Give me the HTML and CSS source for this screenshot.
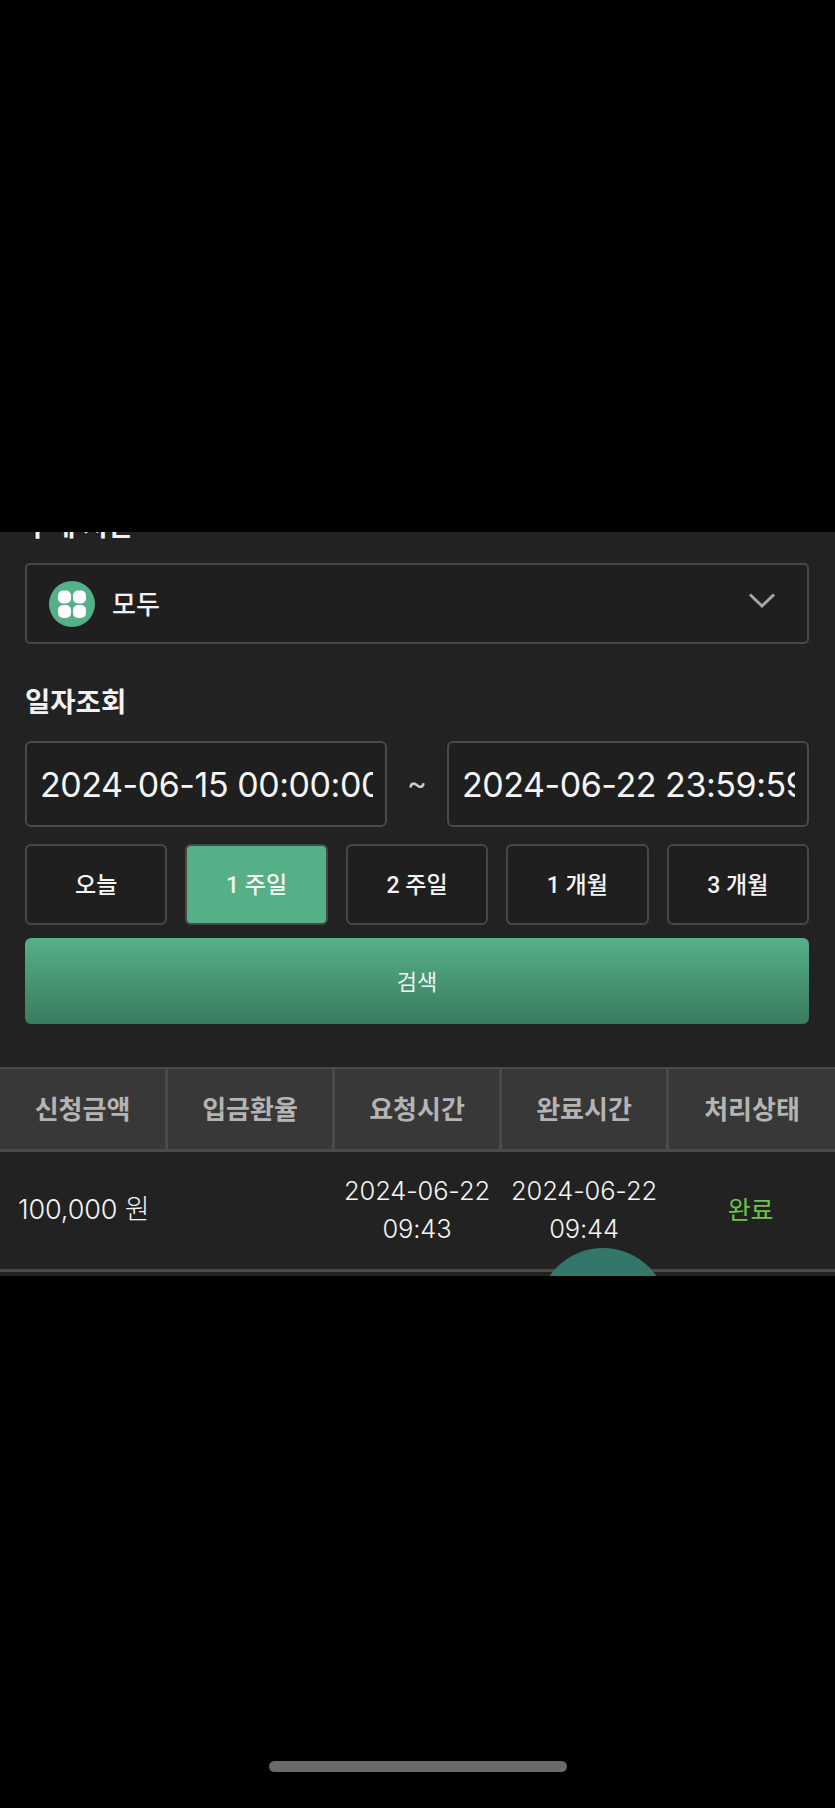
FILE: index.html
```html
<!DOCTYPE html>
<html lang="ko">
<head>
<meta charset="utf-8">
<title>일자조회</title>
<link rel="stylesheet" href="styles.css">
</head>
<body>
<main class="screen">
  <section class="panel">
    <div class="panel-inner">
      <h2 class="label label-clipped">구매 시간</h2>
      <div class="select">
        <span class="coin">
          <svg width="46" height="46" viewBox="0 0 46 46"><circle cx="23" cy="23" r="23" fill="#55b087"/><rect x="9" y="9.5" width="13" height="13" rx="5" fill="#fff"/><rect x="24" y="9.5" width="13" height="13" rx="5" fill="#fff"/><rect x="9" y="24" width="13" height="13" rx="5" fill="#fff"/><rect x="24" y="24" width="13" height="13" rx="5" fill="#fff"/></svg>
        </span>
        <span class="select-text">모두</span>
        <svg class="chevron" width="28" height="17" viewBox="0 0 28 17"><path d="M2 2.5 14 14 26 2.5" fill="none" stroke="#a6a6a6" stroke-width="3"/></svg>
      </div>
      <h2 class="label">일자조회</h2>
      <div class="dates">
        <input class="date" value="2024-06-15 00:00:00" readonly>
        <span class="tilde">~</span>
        <input class="date" value="2024-06-22 23:59:59" readonly>
      </div>
      <div class="ranges">
        <button class="range">오늘</button>
        <button class="range range-on">1 주일</button>
        <button class="range">2 주일</button>
        <button class="range">1 개월</button>
        <button class="range">3 개월</button>
      </div>
      <button class="search">검색</button>
    </div>
    <div class="table">
      <div class="thead">
        <div class="th">신청금액</div>
        <div class="th">입금환율</div>
        <div class="th">요청시간</div>
        <div class="th">완료시간</div>
        <div class="th">처리상태</div>
      </div>
      <div class="tr">
        <div class="td td-amount">100,000 원</div>
        <div class="td"></div>
        <div class="td td-time">2024-06-22<br>09:43</div>
        <div class="td td-time">2024-06-22<br>09:44</div>
        <div class="td td-done">완료</div>
      </div>
    </div>
    <div class="fab"></div>
  </section>
  <div class="home-bar"></div>
</main>
</body>
</html>
```
FILE: styles.css
```css
* { box-sizing: border-box; }
html, body { margin: 0; background: #000; }
body { font-family: Inter, "Noto Sans CJK KR", sans-serif; color: #fff; }
.screen { width: 835px; height: 1808px; padding-top: 532px; overflow: hidden; }
.panel { position: relative; height: 744px; background: #222; overflow: hidden; }
.panel-inner { padding: 0 26px 0 25px; margin-top: -23px; }
.label { margin: 0; font-size: 27.5px; line-height: 34px; font-weight: 600; color: #f2f2f2; }
.label-clipped { height: 54px; }
.select { display: flex; align-items: center; height: 81px; padding: 0 30px 0 22px; background: #1f1f1f; border: 2px solid #484848; border-radius: 5px; margin-bottom: 41px; }
.coin { display: flex; width: 46px; height: 46px; margin-right: 17px; }
.select-text { flex: 1; padding-bottom: 3px; font-size: 26px; font-weight: 500; color: #f0f0f0; }
.chevron { margin-top: -6px; margin-right: 1px; }
.dates { display: flex; align-items: center; margin-top: 22px; }
.date { flex: 0 0 362px; width: 362px; height: 86px; padding: 0 12px 0 13px; background: #1f1f1f; border: 2px solid #4a4a4a; border-radius: 6px; font-family: Inter, sans-serif; font-size: 34px; letter-spacing: -0.45px; color: #f5f5f5; outline: none; }
.tilde { flex: 1; padding-bottom: 3px; text-align: center; font-size: 30px; color: #cfcfcf; }
.ranges { display: grid; grid-template-columns: repeat(5, 1fr); column-gap: 18px; margin-top: 17px; }
.range { height: 81px; padding: 0 0 4px; background: #1f1f1f; border: 2px solid #484848; border-radius: 6px; font-family: Roboto, "Noto Sans CJK KR", sans-serif; font-size: 23px; font-weight: 500; color: #f5f5f5; }
.range-on { background: #55b087; }
.search { display: block; width: 100%; height: 86px; margin-top: 13px; padding: 0 0 3px; border: 0; border-radius: 6px; background: linear-gradient(#55b087, #3a7b60); font-family: Roboto, "Noto Sans CJK KR", sans-serif; font-size: 22px; color: #f0f0f0; }
.table { margin-top: 43px; }
.thead, .tr { display: grid; grid-template-columns: 168px 167px 167px 167px 166px; }
.thead { height: 85px; background: #383838; border-top: 2px solid #4a4a4a; border-bottom: 3px solid #4a4a4a; }
.th { display: flex; align-items: center; justify-content: center; padding-bottom: 3px; border-right: 3px solid #4a4a4a; font-size: 26px; font-weight: 600; color: #b4b4b4; }
.th:last-child { border-right: 0; }
.tr { height: 120px; background: #222; border-bottom: 3px solid #4a4a4a; }
.td { display: flex; align-items: center; justify-content: center; padding-bottom: 2px; text-align: center; font-size: 25.5px; line-height: 38px; font-weight: 300; color: #f5f5f5; letter-spacing: -0.15px; }
.td-time { padding-right: 3px; }
.td-amount { justify-content: flex-start; padding-left: 18px; font-size: 27px; }
.td-done { padding-right: 3px; color: #6cc54a; font-size: 25px; font-weight: 400; }
.fab { position: absolute; left: 538px; top: 716px; width: 130px; height: 130px; border-radius: 50%; background: #33776a; }
.home-bar { width: 298px; height: 11px; margin: 485px 0 0 269px; background: #6a6a6a; border-radius: 6px; }
```
